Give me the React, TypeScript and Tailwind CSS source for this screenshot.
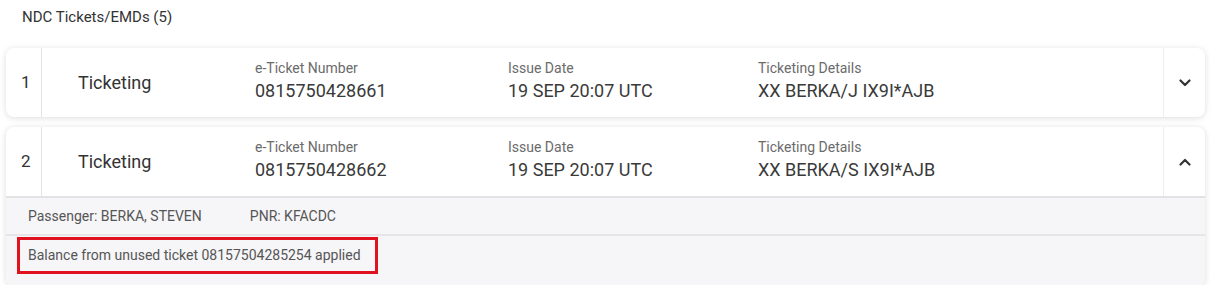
import React from 'react';

interface Ticket {
  no: number;
  type: string;
  number: string;
  issued: string;
  details: string;
  open?: boolean;
}

const tickets: Ticket[] = [
  { no: 1, type: 'Ticketing', number: '0815750428661', issued: '19 SEP 20:07 UTC', details: 'XX BERKA/J IX9I*AJB' },
  { no: 2, type: 'Ticketing', number: '0815750428662', issued: '19 SEP 20:07 UTC', details: 'XX BERKA/S IX9I*AJB', open: true },
];

const Chevron: React.FC<{ up?: boolean }> = ({ up }) => (
  <svg width="12" height="8" viewBox="0 0 12 8" className="text-[#333]">
    <path
      d={up ? 'M1.5 6.5 L6 2 L10.5 6.5' : 'M1.5 1.5 L6 6 L10.5 1.5'}
      fill="none"
      stroke="currentColor"
      strokeWidth="2.2"
      strokeLinecap="round"
      strokeLinejoin="round"
    />
  </svg>
);

const Field: React.FC<{ label: string; value: string; className: string }> = ({ label, value, className }) => (
  <div className={`flex flex-col justify-center pb-[3px] ${className}`}>
    <span className="text-[14px] leading-[16px] text-[#6b6b6b]">{label}</span>
    <span className="text-[18px] leading-[22px] text-[#3a3a3a] mt-[4px]">{value}</span>
  </div>
);

const TicketCard: React.FC<{ t: Ticket }> = ({ t }) => (
  <div className="rounded-[8px] bg-white shadow-[0_1px_6px_rgba(0,0,0,0.14)] overflow-hidden">
    <div className="flex h-[69px]">
      <div className="w-[36px] border-r border-[#e4e4e4] flex items-center pl-[15px] text-[17px] text-[#333]">{t.no}</div>
      <div className="w-[213px] flex items-center pl-[36px] text-[18px] text-[#333]">{t.type}</div>
      <Field label="e-Ticket Number" value={t.number} className="w-[253px]" />
      <Field label="Issue Date" value={t.issued} className="w-[250px]" />
      <Field label="Ticketing Details" value={t.details} className="flex-1" />
      <div className="w-[42px] border-l border-[#eeeeee] flex items-center justify-center">
        <Chevron up={t.open} />
      </div>
    </div>
    {t.open && (
      <div className="bg-[#f6f6f8] border-t-2 border-[#e2e2e4]">
        <div className="h-[38px] flex items-center gap-[48px] pl-[22px] text-[14px] text-[#555] border-b-2 border-[#e6e6e8]">
          <span>Passenger: BERKA, STEVEN</span>
          <span>PNR: KFACDC</span>
        </div>
        <div className="pt-[1px] pl-[11px] pb-[12px]">
          <div className="w-[361px] h-[37px] border-[3px] border-[#e0121f] flex items-center pl-[8px] text-[14px] text-[#555] whitespace-nowrap">
            Balance from unused ticket 08157504285254 applied
          </div>
        </div>
      </div>
    )}
  </div>
);

export default function App() {
  return (
    <div className="w-[1213px] h-[285px] overflow-hidden bg-white font-['Roboto',sans-serif]">
      <div className="pl-[22px] pt-[8px] text-[15px] leading-[18px] text-[#333]">NDC Tickets/EMDs (5)</div>
      <div className="mt-[22px] ml-[6px] mr-[8px] flex flex-col gap-[10px]">
        {tickets.map((t) => (
          <TicketCard key={t.no} t={t} />
        ))}
      </div>
    </div>
  );
}
